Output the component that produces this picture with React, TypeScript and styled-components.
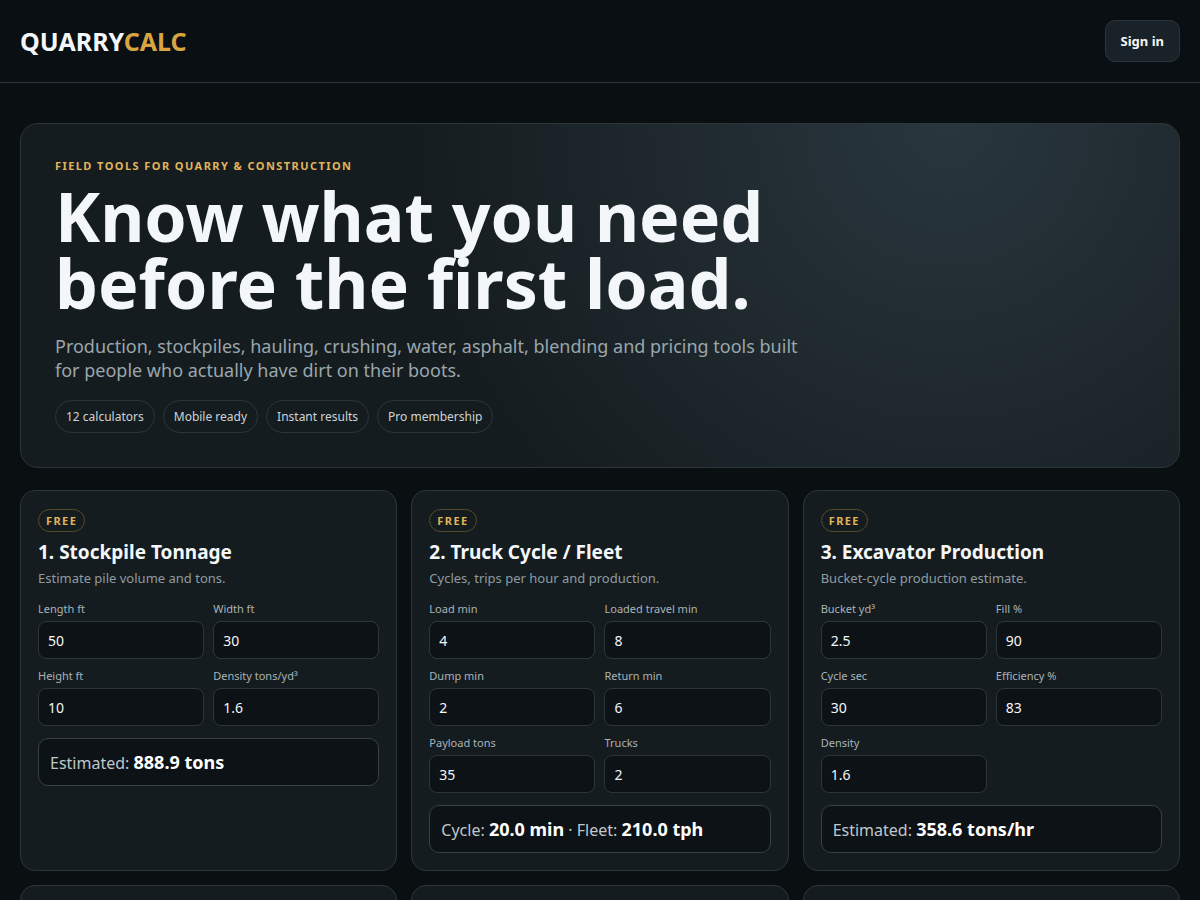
import React, { useId, useState } from 'react';
import styled, { createGlobalStyle } from 'styled-components';

const GlobalStyle = createGlobalStyle`
  * { box-sizing: border-box; }
  body {
    margin: 0;
    background: #0a1012;
    color: #f4f7f9;
    font-family: "Noto Sans", sans-serif;
    font-size: 16px;
    line-height: 24px;
  }
  h1, h2, p { margin: 0; }
  button, input { font-family: inherit; }
`;

const Header = styled.header`
  display: flex;
  align-items: center;
  justify-content: space-between;
  padding: 20px;
  background: #0a0f13;
  border-bottom: 1px solid #2c363a;
`;

const Logo = styled.div`
  font-size: 25px;
  line-height: 34px;
  font-weight: 700;
`;

const LogoAccent = styled.span`
  color: #d9a441;
`;

const SignInButton = styled.button`
  padding: 11px 15px;
  border: 1px solid #2c363a;
  border-radius: 10px;
  background: #192228;
  color: #f4f7f9;
  font-size: 13px;
  font-weight: 700;
  line-height: 18px;
  cursor: pointer;
`;

const Main = styled.main`
  padding: 40px 20px;
`;

const Hero = styled.section`
  padding: 34px;
  border: 1px solid #2c363a;
  border-radius: 18px;
  background: radial-gradient(circle at 80% 0, #29363e, #151c1f 55%);
`;

const Eyebrow = styled.p`
  margin-bottom: 9px;
  color: #e0b45a;
  font-size: 11px;
  line-height: 15px;
  font-weight: 700;
  letter-spacing: 0.13em;
  text-transform: uppercase;
`;

const Headline = styled.h1`
  max-width: 800px;
  font-size: 68px;
  line-height: 67px;
  font-weight: 700;
`;

const Lead = styled.p`
  max-width: 760px;
  margin: 18px 0;
  color: #9aa6ad;
  font-size: 18px;
  line-height: 24px;
`;

const Chips = styled.ul`
  display: flex;
  flex-wrap: wrap;
  gap: 8px;
  margin: 0;
  padding: 0;
  list-style: none;
`;

const Chip = styled.li`
  padding: 7px 10px;
  border: 1px solid #2c363a;
  border-radius: 99px;
  color: #ccd3d6;
  font-size: 12px;
  line-height: 17px;
`;

const CardGrid = styled.div`
  display: grid;
  grid-template-columns: repeat(auto-fit, minmax(320px, 1fr));
  gap: 14px;
  margin-top: 22px;
`;

const Card = styled.section`
  min-height: 300px;
  padding: 18px 17px 17px;
  border: 1px solid #2c363a;
  border-radius: 15px;
  background: #151c1f;
`;

const Badge = styled.div`
  width: fit-content;
  padding: 3px 7px;
  border: 1px solid #574a2c;
  border-radius: 99px;
  color: #e0b45a;
  font-size: 11px;
  line-height: 15px;
  font-weight: 700;
  letter-spacing: 0.13em;
`;

const CardTitle = styled.h2`
  margin-top: 7px;
  font-size: 19px;
  line-height: 26px;
  font-weight: 700;
`;

const CardText = styled.p`
  margin: 4px 0 14px;
  color: #8f9ba1;
  font-size: 13px;
  line-height: 18px;
`;

const Fields = styled.div`
  display: grid;
  grid-template-columns: 1fr 1fr;
  gap: 9px;
`;

const FieldBox = styled.div`
  display: flex;
  flex-direction: column;
  gap: 5px;
  min-width: 0;
`;

const FieldLabel = styled.label`
  color: #a9b3b8;
  font-size: 11px;
  line-height: 15px;
`;

const FieldInput = styled.input`
  width: 100%;
  height: 38px;
  padding: 0 9px;
  border: 1px solid #2c363a;
  border-radius: 8px;
  background: #0d1216;
  color: #f4f7f9;
  font-size: 14px;
`;

const Result = styled.div`
  margin-top: 12px;
  padding: 12px 11px 10px;
  border: 1px solid #364145;
  border-radius: 10px;
  background: #0d1216;
  color: #bfc7cb;
  line-height: 23px;

  strong {
    color: #ffffff;
    font-size: 18px;
  }
`;

type Calculator = {
  title: string;
  text: string;
  fields: { label: string; value: string }[];
  results: (v: number[]) => { label: string; value: string }[];
};

const calculators: Calculator[] = [
  {
    title: '1. Stockpile Tonnage',
    text: 'Estimate pile volume and tons.',
    fields: [
      { label: 'Length ft', value: '50' },
      { label: 'Width ft', value: '30' },
      { label: 'Height ft', value: '10' },
      { label: 'Density tons/yd³', value: '1.6' },
    ],
    results: ([length, width, height, density]) => [
      { label: 'Estimated:', value: `${(((length * width * height) / 27) * density).toFixed(1)} tons` },
    ],
  },
  {
    title: '2. Truck Cycle / Fleet',
    text: 'Cycles, trips per hour and production.',
    fields: [
      { label: 'Load min', value: '4' },
      { label: 'Loaded travel min', value: '8' },
      { label: 'Dump min', value: '2' },
      { label: 'Return min', value: '6' },
      { label: 'Payload tons', value: '35' },
      { label: 'Trucks', value: '2' },
    ],
    results: ([load, travel, dump, back, payload, trucks]) => {
      const cycle = load + travel + dump + back;
      return [
        { label: 'Cycle:', value: `${cycle.toFixed(1)} min` },
        { label: 'Fleet:', value: `${((60 / cycle) * payload * trucks).toFixed(1)} tph` },
      ];
    },
  },
  {
    title: '3. Excavator Production',
    text: 'Bucket-cycle production estimate.',
    fields: [
      { label: 'Bucket yd³', value: '2.5' },
      { label: 'Fill %', value: '90' },
      { label: 'Cycle sec', value: '30' },
      { label: 'Efficiency %', value: '83' },
      { label: 'Density', value: '1.6' },
    ],
    results: ([bucket, fill, cycle, efficiency, density]) => [
      {
        label: 'Estimated:',
        value: `${(bucket * (fill / 100) * (3600 / cycle) * (efficiency / 100) * density).toFixed(1)} tons/hr`,
      },
    ],
  },
];

const chips = ['12 calculators', 'Mobile ready', 'Instant results', 'Pro membership'];

function CalculatorCard({ calculator }: { calculator: Calculator }) {
  const id = useId();
  const [values, setValues] = useState(calculator.fields.map((f) => f.value));
  const results = calculator.results(values.map(Number));

  return (
    <Card>
      <Badge>FREE</Badge>
      <CardTitle>{calculator.title}</CardTitle>
      <CardText>{calculator.text}</CardText>
      <Fields>
        {calculator.fields.map((field, i) => (
          <FieldBox key={field.label}>
            <FieldLabel htmlFor={`${id}-${i}`}>{field.label}</FieldLabel>
            <FieldInput
              id={`${id}-${i}`}
              type="number"
              step="any"
              value={values[i]}
              onChange={(e) => setValues(values.map((v, j) => (j === i ? e.target.value : v)))}
            />
          </FieldBox>
        ))}
      </Fields>
      <Result>
        {results.map((r, i) => (
          <React.Fragment key={r.label}>
            {i > 0 && ' · '}
            {r.label} <strong>{r.value}</strong>
          </React.Fragment>
        ))}
      </Result>
    </Card>
  );
}

export default function App() {
  return (
    <>
      <GlobalStyle />
      <Header>
        <Logo>
          QUARRY<LogoAccent>CALC</LogoAccent>
        </Logo>
        <SignInButton type="button">Sign in</SignInButton>
      </Header>
      <Main>
        <Hero>
          <Eyebrow>Field tools for quarry &amp; construction</Eyebrow>
          <Headline>Know what you need before the first load.</Headline>
          <Lead>
            Production, stockpiles, hauling, crushing, water, asphalt, blending and pricing tools built for people who
            actually have dirt on their boots.
          </Lead>
          <Chips>
            {chips.map((chip) => (
              <Chip key={chip}>{chip}</Chip>
            ))}
          </Chips>
        </Hero>
        <CardGrid>
          {calculators.map((c) => (
            <CalculatorCard key={c.title} calculator={c} />
          ))}
          <Card />
          <Card />
          <Card />
        </CardGrid>
      </Main>
    </>
  );
}
